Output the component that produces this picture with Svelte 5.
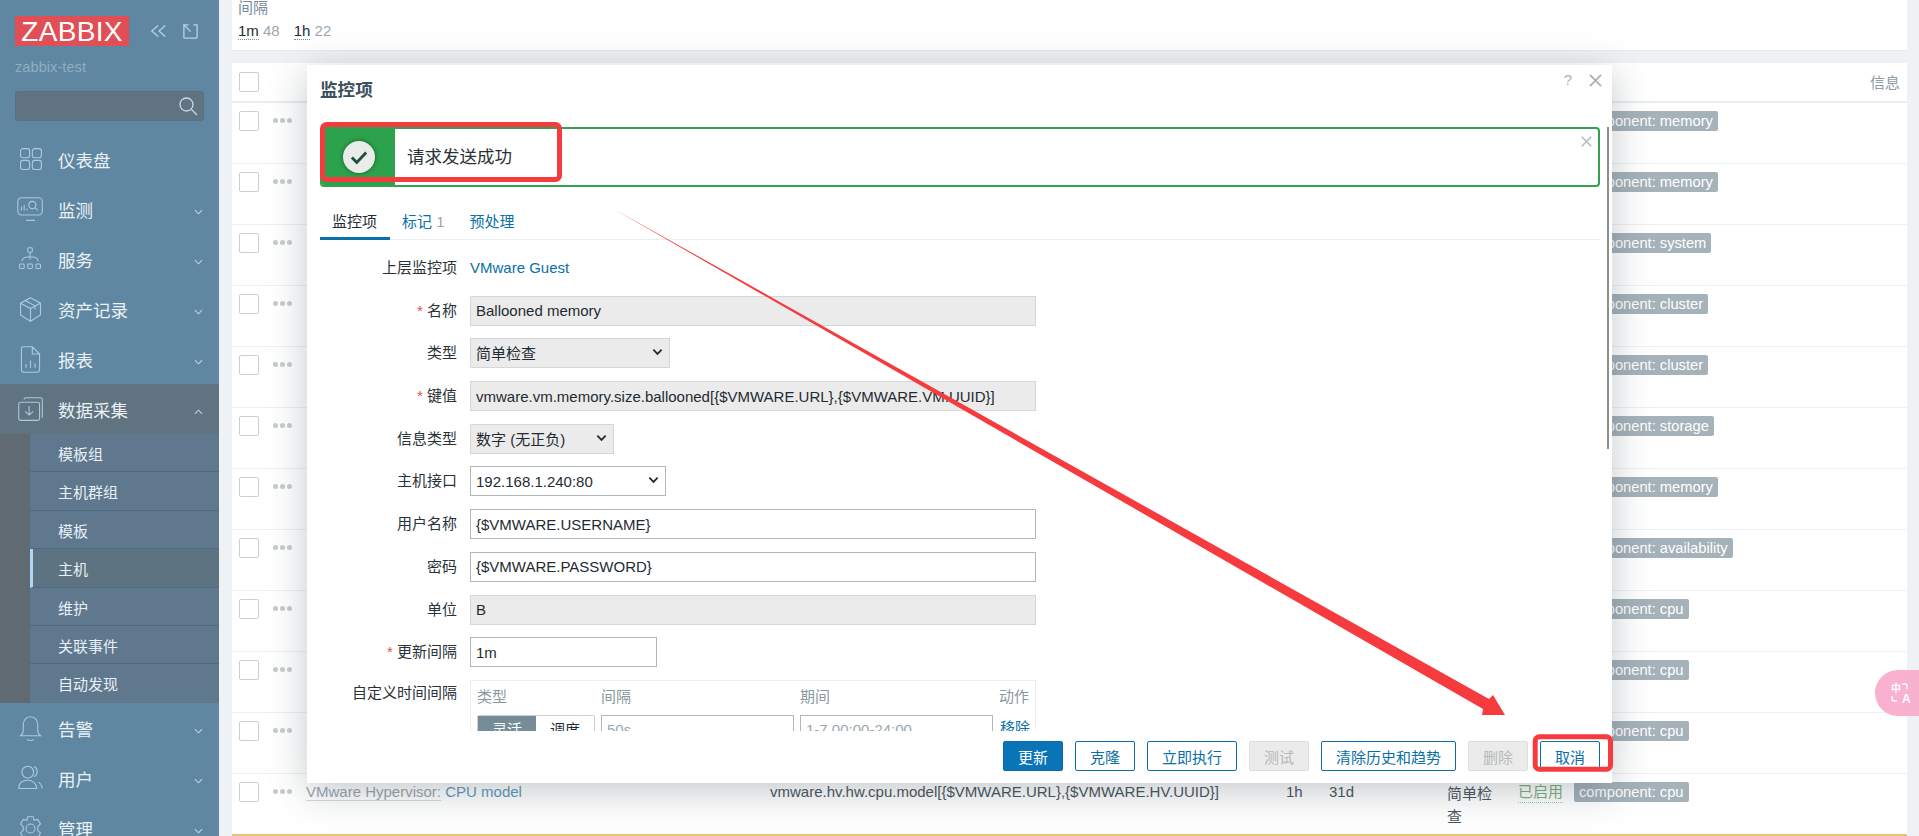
<script>
	const subItems = ["模板组", "主机群组", "模板", "主机", "维护", "关联事件", "自动发现"];
	const rowTags = ["memory", "memory", "system", "cluster", "cluster", "storage", "memory", "availability", "cpu", "cpu", "cpu"];
	const buttons = [
		{ label: "更新", kind: "primary", w: 60 },
		{ label: "克隆", kind: "", w: 60 },
		{ label: "立即执行", kind: "", w: 90 },
		{ label: "测试", kind: "disabled", w: 60 },
		{ label: "清除历史和趋势", kind: "", w: 135 },
		{ label: "删除", kind: "disabled", w: 60 },
		{ label: "取消", kind: "", w: 60 }
	];
</script>

{#snippet chevron(up)}
	<svg class="chev" viewBox="0 0 10 6" width="9" height="6">
		<path d={up ? "M1 5l4-4 4 4" : "M1 1l4 4 4-4"} />
	</svg>
{/snippet}

{#snippet selectArrow()}
	<svg class="sel-arrow" viewBox="0 0 12 8" width="11" height="8"><path d="M1.5 1.5L6 6l4.5-4.5" /></svg>
{/snippet}

<div class="page">
	<aside class="sidebar">
		<div class="brand">
			<div class="logo">ZABBIX</div>
			<svg class="ctl" viewBox="0 0 20 16" width="18" height="16"><path d="M9 2L2 8l7 6M17 2l-7 6 7 6" /></svg>
			<svg class="ctl expand" viewBox="0 0 18 18" width="17" height="17"><path d="M7 2H2v13q0 1 1 1h12q1 0 1-1V2h-4M2 2l7 7" /></svg>
		</div>
		<div class="host">zabbix-test</div>
		<div class="search">
			<svg viewBox="0 0 20 20" width="20" height="20"><circle cx="8.5" cy="8.5" r="6.5" /><path d="M13.5 13.5L19 19" /></svg>
		</div>
		<nav>
			<div class="item">
				<svg class="ico" viewBox="0 0 32 32"><rect x="5" y="4" width="10" height="10" rx="2.5" /><rect x="18" y="4" width="10" height="10" rx="2.5" /><rect x="5" y="17" width="10" height="10" rx="2.5" /><rect x="18" y="17" width="10" height="10" rx="2.5" /></svg>
				<span>仪表盘</span>
			</div>
			<div class="item">
				<svg class="ico" viewBox="0 0 32 32"><rect x="2" y="3" width="27" height="19" rx="4" /><path d="M6 17v-4M9 17v-6M12 17v-2M11 28h10" /><circle cx="18" cy="11" r="4" /><path d="M21 14l3 3" /></svg>
				<span>监测</span>
				{@render chevron(false)}
			</div>
			<div class="item">
				<svg class="ico" viewBox="0 0 32 32"><rect x="13" y="3" width="5" height="5" rx="1" /><path d="M15.500 8v8M15.500 13c-5 0-9 1-9 5M15.500 13c5 0 9 1 9 5" /><rect x="4" y="21" width="5" height="5" rx="1" /><rect x="13" y="21" width="5" height="5" rx="1" /><rect x="22" y="21" width="5" height="5" rx="1" /></svg>
				<span>服务</span>
				{@render chevron(false)}
			</div>
			<div class="item">
				<svg class="ico" viewBox="0 0 32 32"><path d="M16 3l11 6v13l-11 7-11-7V9zM5 9l11 6 11-6M16 15v14M10 6l11 6v4" /></svg>
				<span>资产记录</span>
				{@render chevron(false)}
			</div>
			<div class="item">
				<svg class="ico" viewBox="0 0 32 32"><path d="M7 2h11l8 8v17q0 3-3 3H9q-3 0-3-3V3zM18 2v8h8M11 25v-4M16 25v-8M21 25v-5" /></svg>
				<span>报表</span>
				{@render chevron(false)}
			</div>
			<div class="item open">
				<svg class="ico" viewBox="0 0 32 32"><path d="M9 5q0-2 2-2h16q2 0 2 2v20" /><rect x="3" y="8" width="23" height="20" rx="2" /><path d="M14.500 12v10M10 18l4.500 4 4.500-4" /></svg>
				<span>数据采集</span>
				{@render chevron(true)}
			</div>
			<div class="submenu">
				{#each subItems as sub}
					<div class="sub" class:active={sub === "主机"}>{sub}</div>
				{/each}
			</div>
			<div class="item">
				<svg class="ico" viewBox="0 0 32 32"><path d="M16 3c-5 0-8 4-8 9v6q0 4-3 6h22q-3-2-3-6v-6c0-5-3-9-8-9zM12 28q4 2.500 8 0" /></svg>
				<span>告警</span>
				{@render chevron(false)}
			</div>
			<div class="item">
				<svg class="ico" viewBox="0 0 32 32"><circle cx="13" cy="9" r="6.500" /><path d="M3 27c0-6 4-9 10-9s9 3 10 9zM20 3c4 1 5 8 0 11M25 20q3 2 4 7" /></svg>
				<span>用户</span>
				{@render chevron(false)}
			</div>
			<div class="item">
				<svg class="ico" viewBox="0 0 32 32"><circle cx="16" cy="16" r="5" /><path d="M13 3h6l1 4 4-1 3 5-3 3v4l3 3-3 5-4-1-1 4h-6l-1-4-4 1-3-5 3-3v-4L5 11l3-5 4 1z" /></svg>
				<span>管理</span>
				{@render chevron(false)}
			</div>
		</nav>
	</aside>

	<main class="content">
		<section class="filter">
			<div class="filter-title">间隔</div>
			<div class="filter-vals"><span class="hint">1m</span> <em>48</em><span class="hint second">1h</span> <em>22</em></div>
		</section>
		<section class="table">
			<div class="thead">
				<span class="check"></span>
				<span class="info-head">信息</span>
			</div>
			{#each rowTags as tag}
				<div class="row">
					<span class="check"></span>
					<span class="dots"><i></i><i></i><i></i></span>
					<span class="tag">component: {tag}</span>
				</div>
			{/each}
			<div class="row">
				<span class="check"></span>
				<span class="dots"><i></i><i></i><i></i></span>
				<span class="name"><span class="parent">VMware Hypervisor:</span> <span class="link">CPU model</span></span>
				<span class="key">vmware.hv.hw.cpu.model[&#123;$VMWARE.URL&#125;,&#123;$VMWARE.HV.UUID&#125;]</span>
				<span class="num">1h</span>
				<span class="num2">31d</span>
				<span class="kind">简单检查</span>
				<span class="enabled">已启用</span>
				<span class="tag">component: cpu</span>
			</div>
		</section>
	</main>
	<div class="warn-line"></div>

	<div class="dialog">
		<header>
			<h4>监控项</h4>
			<span class="help">?</span>
			<svg class="close" viewBox="0 0 14 14" width="13" height="13"><path d="M1 1l12 12M13 1L1 13" /></svg>
		</header>
		<div class="message">
			<div class="msg-icon">
				<div class="circle">
					<svg viewBox="0 0 20 20" width="22" height="22"><path d="M3.500 10.500l4.500 4.500 8.500-9" /></svg>
				</div>
			</div>
			<div class="msg-text">请求发送成功</div>
			<svg class="msg-close" viewBox="0 0 14 14" width="11" height="11"><path d="M1 1l12 12M13 1L1 13" /></svg>
		</div>
		<div class="tabs">
			<span class="tab current">监控项</span>
			<span class="tab">标记 <em>1</em></span>
			<span class="tab">预处理</span>
		</div>
		<div class="form">
			<label>上层监控项</label>
			<div class="ctrl"><span class="link">VMware Guest</span></div>

			<label><b>*</b> 名称</label>
			<input class="ro" readonly value="Ballooned memory" />

			<label>类型</label>
			<div class="select ro type">简单检查 {@render selectArrow()}</div>

			<label><b>*</b> 键值</label>
			<input class="ro" readonly value={"vmware.vm.memory.size.ballooned[{$VMWARE.URL},{$VMWARE.VM.UUID}]"} />

			<label>信息类型</label>
			<div class="select ro info">数字 (无正负) {@render selectArrow()}</div>

			<label>主机接口</label>
			<div class="select iface">192.168.1.240:80 {@render selectArrow()}</div>

			<label>用户名称</label>
			<input readonly value={"{$VMWARE.USERNAME}"} />

			<label>密码</label>
			<input readonly value={"{$VMWARE.PASSWORD}"} />

			<label>单位</label>
			<input class="ro" readonly value="B" />

			<label><b>*</b> 更新间隔</label>
			<input class="short" readonly value="1m" />

			<label class="top">自定义时间间隔</label>
			<div class="custom">
				<div class="c-head">
					<span class="c1">类型</span><span class="c2">间隔</span><span class="c3">期间</span><span class="c4">动作</span>
				</div>
				<div class="c-row">
					<div class="seg"><span class="on">灵活</span><span>调度</span></div>
					<input class="c-in" readonly placeholder="50s" />
					<input class="c-in" readonly placeholder="1-7,00:00-24:00" />
					<span class="link remove">移除</span>
				</div>
			</div>
		</div>
		<footer>
			{#each buttons as b}
				<button class={b.kind} style="width: {b.w}px">{b.label}</button>
			{/each}
		</footer>
		<div class="scrollbar"></div>
	</div>

	<div class="translate">
		<span class="t1">中</span><span class="t2">A</span>
		<svg viewBox="0 0 44 46" width="44" height="46"><path d="M27 14h3q2 0 2 2v3M17 26v3q0 2 2 2h3" /></svg>
	</div>

	<svg class="marks" viewBox="0 0 1919 836" width="1919" height="836">
		<rect x="322.500" y="124.500" width="237" height="55" rx="4" />
		<rect x="1535.200" y="736.800" width="75.300" height="32.400" rx="4" />
		<polygon points="612,208 1489,699 1493,695 1505,715 1482,715 1483,709" />
	</svg>
</div>

<style>
	:global(body) {
		margin: 0;
		overflow: hidden;
	}

	.page {
		position: relative;
		display: flex;
		width: 1919px;
		height: 836px;
		overflow: hidden;
		background: #eef2f4;
		font-family: "Liberation Sans", "Noto Sans CJK SC", sans-serif;
		font-size: 15px;
		color: #1f2c33;
	}

	/* sidebar */
	.sidebar {
		flex: none;
		width: 219px;
		height: 836px;
		background: #5f87a1;
		color: #e9f1f6;
		overflow: hidden;
	}

	.brand {
		display: flex;
		align-items: center;
		padding: 16px 0 0 15px;
	}

	.logo {
		width: 114px;
		height: 30px;
		line-height: 31px;
		text-align: center;
		background: #e04f55;
		color: #fff;
		font-size: 28px;
		letter-spacing: 0.3px;
	}

	.ctl {
		margin-left: 21px;
		fill: none;
		stroke: #b5d3e6;
		stroke-width: 1.4;
	}

	.ctl.expand {
		margin-left: 14px;
	}

	.host {
		margin: 11px 0 0 15px;
		color: #90aec2;
		font-size: 14.7px;
		line-height: 20px;
	}

	.search {
		display: flex;
		align-items: center;
		justify-content: flex-end;
		box-sizing: border-box;
		width: 189px;
		height: 30px;
		margin: 14px 0 0 15px;
		padding-right: 5px;
		background: #5f7380;
		border: 1px solid #587080;
		border-radius: 3px;
	}

	.search svg {
		fill: none;
		stroke: #c5dbe8;
		stroke-width: 1.3;
	}

	nav {
		margin-top: 13px;
	}

	.item {
		display: flex;
		align-items: center;
		height: 50px;
		padding-left: 16px;
		font-size: 17.5px;
		position: relative;
	}

	.item span {
		margin-left: 13px;
	}

	.item.open {
		background: #5f7380;
	}

	.ico {
		flex: none;
		width: 29px;
		height: 29px;
		fill: none;
		stroke: #a8cbe0;
		stroke-width: 1.2;
	}

	.chev {
		position: absolute;
		right: 16px;
		top: 25px;
		fill: none;
		stroke: #bcd6e6;
		stroke-width: 1.2;
	}

	.submenu {
		background: #5f6a72;
		padding-left: 30px;
		height: 269px;
	}

	.sub {
		box-sizing: border-box;
		height: 38.4px;
		line-height: 35px;
		padding-top: 3px;
		padding-left: 28px;
		background: #5f788e;
		border-bottom: 1px solid #4e6a80;
	}

	.sub:last-child {
		border-bottom: none;
	}

	.sub.active {
		background: #5d7381;
		border-left: 3px solid #aed7f3;
		padding-left: 25px;
	}

	/* content */
	.content {
		flex: 1;
		padding: 0 12px 0 13px;
	}

	.filter {
		height: 51px;
		box-sizing: border-box;
		padding: 0 6px;
		background: #fff;
		border-bottom: 1px solid #e6eaec;
	}

	.filter-title {
		color: #768d99;
		line-height: 15px;
	}

	.filter-vals {
		margin-top: 6px;
		line-height: 20px;
	}

	.hint {
		border-bottom: 1px dotted #768d99;
	}

	.hint.second {
		margin-left: 14px;
	}

	em {
		font-style: normal;
		color: #9aa7af;
	}

	.table {
		margin-top: 12px;
		background: #fff;
	}

	.thead {
		position: relative;
		height: 38px;
		border-bottom: 2px solid #e8ecee;
	}

	.thead .check {
		top: 9px;
	}

	.info-head {
		position: absolute;
		right: 7px;
		top: 8px;
		color: #8f9ca4;
	}

	.row {
		position: relative;
		box-sizing: border-box;
		height: 61px;
		border-bottom: 1px solid #eef1f3;
	}

	.row:first-of-type {
		height: 60px;
	}

	.check {
		position: absolute;
		left: 7px;
		top: 8px;
		box-sizing: border-box;
		width: 20px;
		height: 20px;
		border: 1px solid #c9cfd3;
		border-radius: 2px;
		background: #fff;
	}

	.dots {
		position: absolute;
		left: 41px;
		top: 15px;
		display: flex;
		gap: 2px;
	}

	.dots i {
		width: 5px;
		height: 5px;
		border-radius: 50%;
		background: #c6ccd0;
	}

	.tag {
		position: absolute;
		left: 1342px;
		top: 8px;
		height: 20px;
		line-height: 20px;
		padding: 0 5px;
		border-radius: 2px;
		background: #a5b2ba;
		color: #fff;
		font-size: 14.7px;
		white-space: nowrap;
	}

	.name,
	.key,
	.num,
	.num2,
	.kind,
	.enabled {
		position: absolute;
		top: 8px;
		line-height: 20px;
	}

	.name {
		left: 74px;
	}

	.parent {
		color: #9aa7af;
		border-bottom: 1px solid #d5dade;
	}

	.link {
		color: #0a6fa8;
	}

	.name .link {
		color: #5f9cc2;
	}

	.key {
		left: 538px;
		color: #4b585f;
	}

	.num {
		left: 1054px;
		color: #4b585f;
	}

	.num2 {
		left: 1097px;
		color: #4b585f;
	}

	.kind {
		left: 1215px;
		width: 48px;
		line-height: 23px;
		color: #4b585f;
	}

	.enabled {
		left: 1286px;
		color: #80b080;
		border-bottom: 1px dotted #a8c8a8;
	}

	.warn-line {
		position: absolute;
		left: 232px;
		right: 12px;
		bottom: 0;
		height: 2px;
		background: #e9c271;
	}

	/* dialog */
	.dialog {
		position: absolute;
		left: 307px;
		top: 65px;
		box-sizing: border-box;
		width: 1305px;
		height: 718px;
		padding: 0 12px 0 13px;
		background: #fff;
		box-shadow: 0 8px 36px rgba(40, 55, 65, 0.28);
	}

	header {
		position: relative;
		height: 62px;
	}

	h4 {
		margin: 0;
		padding-top: 13px;
		font-size: 17.6px;
		line-height: 24px;
		font-weight: 700;
		color: #3b4f5c;
	}

	.help {
		position: absolute;
		right: 28px;
		top: 6px;
		color: #a9b2b8;
		font-size: 15px;
	}

	.close {
		position: absolute;
		right: -2px;
		top: 9px;
		fill: none;
		stroke: #a9b2b8;
		stroke-width: 2;
	}

	.message {
		position: relative;
		display: flex;
		box-sizing: border-box;
		height: 60px;
		border: 2px solid #34a050;
		border-radius: 4px;
		overflow: hidden;
	}

	.msg-icon {
		display: flex;
		align-items: center;
		justify-content: center;
		width: 73px;
		background: #2ba24b;
	}

	.circle {
		display: flex;
		align-items: center;
		justify-content: center;
		width: 32px;
		height: 32px;
		border-radius: 50%;
		background: #e9ece8;
		box-shadow: 0 0 4px rgba(0, 50, 20, 0.6);
	}

	.circle svg {
		fill: none;
		stroke: #20503a;
		stroke-width: 2.6;
	}

	.msg-text {
		margin-left: 12px;
		font-size: 17.5px;
		line-height: 56px;
		color: #2a3238;
	}

	.msg-close {
		position: absolute;
		right: 6px;
		top: 7px;
		fill: none;
		stroke: #b3bbc0;
		stroke-width: 2;
	}

	.tabs {
		display: flex;
		height: 52px;
		margin-top: 1px;
		box-sizing: border-box;
		border-bottom: 1px solid #ebeef0;
	}

	.tab {
		box-sizing: border-box;
		height: 52px;
		padding: 23px 13px 0 12px;
		line-height: 21px;
		color: #0a6fa8;
	}

	.tab.current {
		color: #1f2c33;
		border-bottom: 3px solid #0a6fa8;
	}

	.form {
		display: grid;
		grid-template-columns: 137px 566px;
		column-gap: 13px;
		row-gap: 12.7px;
		grid-auto-rows: 30px;
		align-content: start;
		height: 491px;
		margin-bottom: 10px;
		padding-top: 13px;
		box-sizing: border-box;
		overflow: hidden;
	}

	.form label {
		text-align: right;
		line-height: 30px;
		color: #2a3238;
	}

	.form label b {
		font-weight: 400;
		color: #d9534f;
	}

	.form label.top {
		line-height: 26px;
	}

	.ctrl {
		line-height: 30px;
	}

	input {
		box-sizing: border-box;
		width: 100%;
		height: 30px;
		padding: 0 5px;
		border: 1px solid #b0b7bb;
		background: #fff;
		font: inherit;
		color: #1f2c33;
		outline: none;
		border-radius: 0;
	}

	input.ro {
		background: #ebebeb;
		border-color: #d4d7d9;
	}

	input.short {
		width: 187px;
	}

	.select {
		position: relative;
		box-sizing: border-box;
		height: 30px;
		line-height: 30px;
		padding-left: 5px;
		border: 1px solid #b0b7bb;
		white-space: nowrap;
	}

	.select.ro {
		background: #ebebeb;
		border-color: #d4d7d9;
	}

	.select.type {
		width: 200px;
	}

	.select.info {
		width: 144px;
	}

	.select.iface {
		width: 196px;
	}

	.sel-arrow {
		position: absolute;
		right: 6px;
		top: 9px;
		fill: none;
		stroke: #1f2c33;
		stroke-width: 2;
	}

	.custom {
		box-sizing: border-box;
		height: 100px;
		padding: 0 6px;
		border: 1px solid #ebeef0;
		width: 566px;
	}

	.c-head {
		display: flex;
		height: 34px;
		line-height: 32px;
		color: #8a98a1;
	}

	.c1,
	.c2,
	.c3,
	.c4 {
		flex: none;
	}

	.c1 {
		width: 124px;
	}

	.c2 {
		width: 199px;
	}

	.c3 {
		width: 199px;
	}

	.c-row {
		display: flex;
		align-items: flex-start;
	}

	.seg {
		display: flex;
		flex: none;
		box-sizing: border-box;
		width: 118px;
		height: 30px;
		line-height: 28px;
		text-align: center;
		border: 1px solid #c9cfd3;
		border-radius: 2px;
		margin-right: 6px;
	}

	.seg span {
		flex: 1;
	}

	.seg .on {
		background: #768d99;
		color: #fff;
	}

	.c-in {
		flex: none;
		width: 193px;
		margin-right: 6px;
	}

	.c-in::placeholder {
		color: #9aa7af;
	}

	.remove {
		flex: none;
		margin-left: 1px;
		line-height: 26px;
		white-space: nowrap;
	}

	footer {
		display: flex;
		justify-content: flex-end;
		gap: 12px;
	}

	button {
		box-sizing: border-box;
		height: 30px;
		padding: 0;
		border: 1px solid #0a6fa8;
		border-radius: 2px;
		background: #fff;
		color: #0a6fa8;
		font: inherit;
	}

	button.primary {
		background: #0a74b8;
		color: #fff;
	}

	button.disabled {
		background: #ebebeb;
		border-color: #dcdfe0;
		color: #b5b9bb;
	}

	.scrollbar {
		position: absolute;
		right: 3px;
		top: 62px;
		width: 2px;
		height: 322px;
		background: #8d8d8d;
	}

	/* browser extension button */
	.translate {
		position: absolute;
		right: 0;
		top: 670px;
		width: 44px;
		height: 46px;
		border-radius: 23px 0 0 23px;
		background: rgba(247, 170, 203, 0.9);
		color: #fff;
		font-weight: 700;
		line-height: 12px;
	}

	.translate span {
		position: absolute;
	}

	.translate svg {
		display: block;
		fill: none;
		stroke: #fff;
		stroke-width: 1.4;
	}

	.t1 {
		left: 16px;
		top: 13px;
		font-size: 10px;
	}

	.t2 {
		left: 27px;
		top: 23px;
		font-size: 12px;
	}

	.marks {
		position: absolute;
		left: 0;
		top: 0;
		pointer-events: none;
	}

	.marks rect {
		fill: none;
		stroke: #f63b3f;
		stroke-width: 5;
	}

	.marks polygon {
		fill: #f63b3f;
	}
</style>
